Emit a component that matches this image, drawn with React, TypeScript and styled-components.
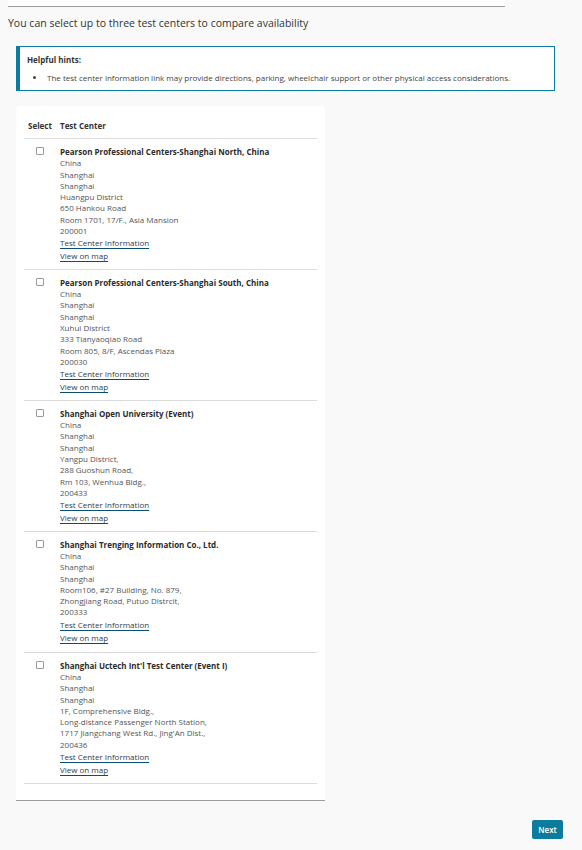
import React from 'react';
import styled, { createGlobalStyle } from 'styled-components';

const Global = createGlobalStyle`
	body {
		margin: 0;
		background: #f9f9f9;
		font-family: 'Open Sans', 'Noto Sans', sans-serif;
		color: #333;
	}
`;

const Page = styled.div`
	padding: 0 8px 12px;
	display: flex;
	flex-direction: column;
`;

const TopStrip = styled.div`
	width: 497px;
	height: 6px;
	background: #fff;
	border-bottom: 1px solid #9c9c9c;
`;

const Intro = styled.p`
	margin: 9px 0 0;
	font-size: 10.5px;
	line-height: 14px;
	color: #333;
`;

const Hints = styled.div`
	margin: 16px 0 0 8px;
	width: 539px;
	box-sizing: border-box;
	background: #fff;
	border: 1px solid #0b7c9d;
	border-left-width: 4px;
	padding: 7px 7px 7px;
	.hint-title {
		font-size: 8px;
		font-weight: 700;
		line-height: 11px;
		color: #333;
		margin: 0;
	}
	ul {
		margin: 7px 0 0;
		padding-left: 19px;
	}
	li {
		font-size: 8px;
		line-height: 11px;
		color: #444;
		padding-left: 1px;
	}
`;

const Card = styled.div`
	margin: 15px 0 0 8px;
	width: 309px;
	box-sizing: border-box;
	background: #fff;
	border-radius: 3px 3px 0 0;
	box-shadow: 0 1px 0 #9c9c9c;
	padding: 8px 8px 16px;
`;

const Table = styled.table`
	width: 100%;
	border-collapse: collapse;
	th {
		font-size: 8px;
		font-weight: 700;
		text-align: left;
		line-height: 12px;
		padding: 6px 4px;
		color: #333;
		border-bottom: 1px solid #dcdcdc;
	}
	th.sel {
		width: 24px;
	}
`;

const Row = styled.tr<{ $short?: boolean }>`
	td {
		vertical-align: top;
		padding: 7px 4px ${(p) => (p.$short ? '8px' : '6.5px')};
		border-bottom: 1px solid #dcdcdc;
	}
`;

const Box = styled.span`
	display: block;
	width: 6px;
	height: 6px;
	margin: 1px auto 0;
	border: 1px solid #999;
	border-radius: 1px;
	background: #fff;
`;

const Name = styled.div`
	font-size: 8px;
	font-weight: 700;
	line-height: 11.3px;
	color: #2b2b2b;
`;

const Line = styled.div`
	font-size: 8px;
	line-height: 11.3px;
	color: #555;
`;

const CenterLink = styled.a`
	display: block;
	width: fit-content;
	font-size: 8px;
	line-height: 13px;
	color: #2c3e4c;
	text-decoration: underline;
	text-decoration-color: #0b4e6e;
	text-underline-offset: 1.5px;
	cursor: pointer;
`;

const Footer = styled.div`
	display: flex;
	justify-content: flex-end;
	margin: 20px 11px 0 0;
`;

const NextButton = styled.button`
	width: 31px;
	height: 19px;
	padding: 0;
	border: none;
	border-radius: 2px;
	background: #0b7c9d;
	color: #fff;
	font-family: 'Open Sans', sans-serif;
	font-size: 8px;
	font-weight: 600;
	cursor: pointer;
`;

const centers = [
	{
		name: 'Pearson Professional Centers-Shanghai North, China',
		lines: ['China', 'Shanghai', 'Shanghai', 'Huangpu District', '650 Hankou Road', 'Room 1701, 17/F., Asia Mansion', '200001'],
	},
	{
		name: 'Pearson Professional Centers-Shanghai South, China',
		lines: ['China', 'Shanghai', 'Shanghai', 'Xuhui District', '333 Tianyaoqiao Road', 'Room 805, 8/F, Ascendas Plaza', '200030'],
	},
	{
		name: 'Shanghai Open University (Event)',
		lines: ['China', 'Shanghai', 'Shanghai', 'Yangpu District,', '288 Guoshun Road,', 'Rm 103, Wenhua Bldg.,', '200433'],
	},
	{
		name: 'Shanghai Trenging Information Co., Ltd.',
		lines: ['China', 'Shanghai', 'Shanghai', 'Room106, #27 Building, No. 879,', 'Zhongjiang Road, Putuo Distrcit,', '200333'],
	},
	{
		name: "Shanghai Uctech Int'l Test Center (Event I)",
		lines: [
			'China',
			'Shanghai',
			'Shanghai',
			'1F, Comprehensive Bldg.,',
			'Long-distance Passenger North Station,',
			"1717 Jiangchang West Rd., Jing'An Dist.,",
			'200436',
		],
	},
];

export default function App() {
	return (
		<>
			<Global />
			<Page>
				<TopStrip />
				<Intro>You can select up to three test centers to compare availability</Intro>
				<Hints>
					<p className='hint-title'>Helpful hints:</p>
					<ul>
						<li>
							The test center information link may provide directions, parking, wheelchair support or other physical access
							considerations.
						</li>
					</ul>
				</Hints>
				<Card>
					<Table>
						<thead>
							<tr>
								<th className='sel'>Select</th>
								<th>Test Center</th>
							</tr>
						</thead>
						<tbody>
							{centers.map((c) => (
								<Row key={c.name} $short={c.lines.length < 7}>
									<td>
										<Box />
									</td>
									<td>
										<Name>{c.name}</Name>
										{c.lines.map((l, i) => (
											<Line key={i}>{l}</Line>
										))}
										<CenterLink>Test Center Information</CenterLink>
										<CenterLink>View on map</CenterLink>
									</td>
								</Row>
							))}
						</tbody>
					</Table>
				</Card>
				<Footer>
					<NextButton>Next</NextButton>
				</Footer>
			</Page>
		</>
	);
}
